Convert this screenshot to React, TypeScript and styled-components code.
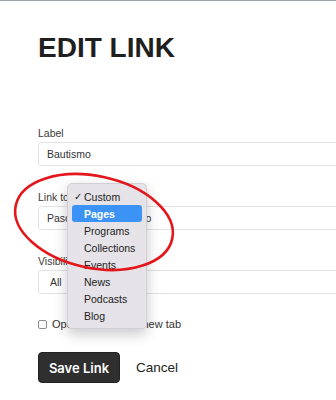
import React from "react";
import styled, { createGlobalStyle } from "styled-components";

const GlobalStyle = createGlobalStyle`
  html, body { margin: 0; padding: 0; background: #ffffff; overflow: hidden; }
  body { font-family: "Liberation Sans", Arial, sans-serif; color: #333; }
  * { box-sizing: border-box; }
`;

const Page = styled.div`
  position: relative;
  width: 336px;
  height: 400px;
  overflow: hidden;
  border-top: 1px solid #9ea3aa;
`;

const Form = styled.div`
  width: 440px;
  padding: 31px 0 0 38px;
  display: flex;
  flex-direction: column;
`;

const Title = styled.h1`
  margin: 0 0 62px;
  font-family: "Liberation Sans", Arial, sans-serif;
  font-size: 28px;
  line-height: 32px;
  font-weight: 700;
  color: #1f1f1f;
  letter-spacing: 0;
`;

const Fields = styled.div`
  display: flex;
  flex-direction: column;
  gap: 24px;
`;

const Field = styled.div`
  position: relative;
  display: flex;
  flex-direction: column;
  gap: 2px;
`;

const Label = styled.label`
  font-size: 10.5px;
  line-height: 14px;
  color: #3a3a3a;
`;

const Input = styled.div<{ $pad?: number }>`
  height: 24px;
  width: 100%;
  border: 1px solid #e3e3e3;
  border-radius: 3px;
  background: #fff;
  display: flex;
  align-items: center;
  padding-left: ${(p) => p.$pad ?? 8}px;
  font-size: 10.5px;
  color: #333;
  white-space: nowrap;
`;

const CheckRow = styled.label`
  margin-top: 23px;
  display: flex;
  align-items: center;
  gap: 5px;
  font-size: 11px;
  line-height: 14px;
  color: #333;
`;

const Box = styled.span`
  width: 9px;
  height: 9px;
  border: 1px solid #8d8d8d;
  border-radius: 2px;
  background: #fff;
  flex: none;
`;

const Actions = styled.div`
  margin-top: 21px;
  display: flex;
  align-items: center;
  gap: 16px;
`;

const SaveButton = styled.button`
  height: 31px;
  width: 82px;
  padding: 0;
  border: 1px solid #222;
  border-radius: 4px;
  background: #2f2f2f;
  color: #fff;
  font-family: Inter, "Liberation Sans", sans-serif;
  font-weight: 600;
  font-size: 13px;
  cursor: pointer;
`;

const CancelLink = styled.span`
  font-size: 13.5px;
  color: #222;
`;

const Popup = styled.div`
  position: absolute;
  top: -7px;
  left: 29px;
  width: 80px;
  padding: 4px;
  background: #e5e2e8;
  border: 1px solid #d2d0d6;
  border-radius: 5px;
  box-shadow: 0 5px 14px rgba(0, 0, 0, 0.22);
  display: flex;
  flex-direction: column;
  z-index: 2;
`;

const Option = styled.div<{ $active?: boolean }>`
  height: 17px;
  display: grid;
  grid-template-columns: 12px 1fr;
  align-items: center;
  border-radius: 3px;
  font-size: 10.5px;
  background: ${(p) => (p.$active ? "#3b93f5" : "transparent")};
  color: ${(p) => (p.$active ? "#fff" : "#222")};
  font-weight: ${(p) => (p.$active ? 700 : 400)};
`;

const Check = styled.span`
  font-size: 10px;
  padding-left: 2px;
  color: #222;
`;

const Annotation = styled.svg`
  position: absolute;
  left: 0;
  top: 0;
  pointer-events: none;
  z-index: 3;
`;

const options = ["Custom", "Pages", "Programs", "Collections", "Events", "News", "Podcasts", "Blog"];

export default function App() {
  return (
    <>
      <GlobalStyle />
      <Page>
        <Form>
          <Title>EDIT LINK</Title>
          <Fields>
            <Field>
              <Label>Label</Label>
              <Input>Bautismo</Input>
            </Field>
            <Field>
              <Label>Link to</Label>
              <Input>Pascoa com Bautismo</Input>
              <Popup>
                {options.map((o, i) => (
                  <Option key={o} $active={o === "Pages"}>
                    <Check>{i === 0 ? "✓" : ""}</Check>
                    <span>{o}</span>
                  </Option>
                ))}
              </Popup>
            </Field>
            <Field>
              <Label>Visibility</Label>
              <Input $pad={11}>All</Input>
            </Field>
          </Fields>
          <CheckRow>
            <Box />
            Open this link in a new tab
          </CheckRow>
          <Actions>
            <SaveButton>Save Link</SaveButton>
            <CancelLink>Cancel</CancelLink>
          </Actions>
        </Form>
        <Annotation width="336" height="400" viewBox="0 0 336 400">
          <ellipse
            cx="94"
            cy="221"
            rx="80"
            ry="46"
            transform="rotate(12 94 221)"
            fill="none"
            stroke="#e3161b"
            strokeWidth="2.6"
          />
        </Annotation>
      </Page>
    </>
  );
}
